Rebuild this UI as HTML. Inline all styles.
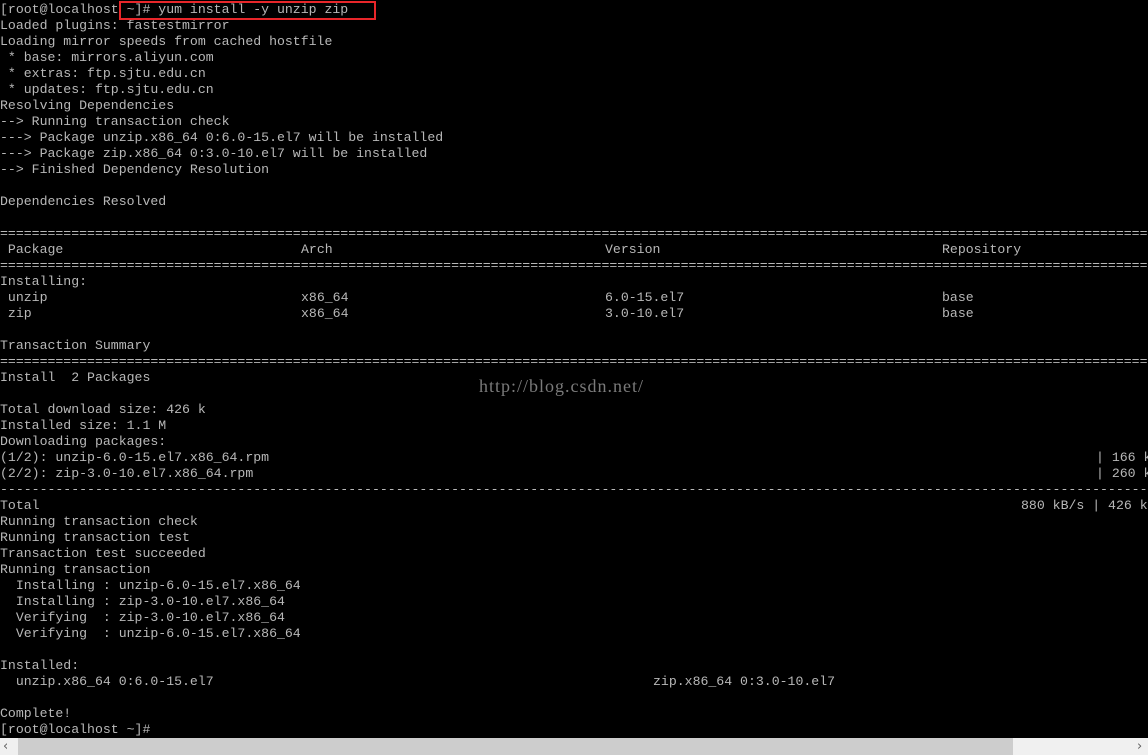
<!DOCTYPE html>
<html><head><meta charset="utf-8"><style>
html,body{margin:0;padding:0;background:#000;width:1148px;height:755px;overflow:hidden}
#w{position:absolute;left:0;top:1px;width:1148px;height:737px}
.t{position:absolute;white-space:pre;font-family:"Liberation Mono",monospace;font-size:13.2px;line-height:16px;color:#b8b8b8;height:16px}
.box{position:absolute;left:119px;top:1px;width:253px;height:15px;border:2px solid #e8262a}
.wm{position:absolute;left:479px;top:376px;font-family:"Liberation Serif",serif;font-size:18px;color:#7a7a7a;letter-spacing:1px}
.sb{position:absolute;left:0;top:738px;width:1148px;height:17px;background:#f0f0f0}
.th{position:absolute;left:18px;top:738px;width:995px;height:17px;background:#cdcdcd}
.ar{position:absolute;top:738px;font-family:"DejaVu Sans",sans-serif;font-size:13px;line-height:17px;color:#606060}
</style></head><body>
<div id="w">
<div class="t" style="left:0;top:1px">[root@localhost ~]# yum install -y unzip zip</div>
<div class="t" style="left:0;top:17px">Loaded plugins: fastestmirror</div>
<div class="t" style="left:0;top:33px">Loading mirror speeds from cached hostfile</div>
<div class="t" style="left:0;top:49px"> * base: mirrors.aliyun.com</div>
<div class="t" style="left:0;top:65px"> * extras: ftp.sjtu.edu.cn</div>
<div class="t" style="left:0;top:81px"> * updates: ftp.sjtu.edu.cn</div>
<div class="t" style="left:0;top:97px">Resolving Dependencies</div>
<div class="t" style="left:0;top:113px">--&gt; Running transaction check</div>
<div class="t" style="left:0;top:129px">---&gt; Package unzip.x86_64 0:6.0-15.el7 will be installed</div>
<div class="t" style="left:0;top:145px">---&gt; Package zip.x86_64 0:3.0-10.el7 will be installed</div>
<div class="t" style="left:0;top:161px">--&gt; Finished Dependency Resolution</div>
<div class="t" style="left:0;top:193px">Dependencies Resolved</div>
<div class="t" style="left:0;top:225px">==================================================================================================================================================</div>
<div class="t" style="left:0;top:241px"> Package</div><div class="t" style="left:301px;top:241px">Arch</div><div class="t" style="left:605px;top:241px">Version</div><div class="t" style="left:942px;top:241px">Repository</div>
<div class="t" style="left:0;top:257px">==================================================================================================================================================</div>
<div class="t" style="left:0;top:273px">Installing:</div>
<div class="t" style="left:0;top:289px"> unzip</div><div class="t" style="left:301px;top:289px">x86_64</div><div class="t" style="left:605px;top:289px">6.0-15.el7</div><div class="t" style="left:942px;top:289px">base</div>
<div class="t" style="left:0;top:305px"> zip</div><div class="t" style="left:301px;top:305px">x86_64</div><div class="t" style="left:605px;top:305px">3.0-10.el7</div><div class="t" style="left:942px;top:305px">base</div>
<div class="t" style="left:0;top:337px">Transaction Summary</div>
<div class="t" style="left:0;top:353px">==================================================================================================================================================</div>
<div class="t" style="left:0;top:369px">Install  2 Packages</div>
<div class="t" style="left:0;top:401px">Total download size: 426 k</div>
<div class="t" style="left:0;top:417px">Installed size: 1.1 M</div>
<div class="t" style="left:0;top:433px">Downloading packages:</div>
<div class="t" style="left:0;top:449px">(1/2): unzip-6.0-15.el7.x86_64.rpm</div><div class="t" style="left:1096px;top:449px">| 166 k</div>
<div class="t" style="left:0;top:465px">(2/2): zip-3.0-10.el7.x86_64.rpm</div><div class="t" style="left:1096px;top:465px">| 260 k</div>
<div class="t" style="left:0;top:481px">--------------------------------------------------------------------------------------------------------------------------------------------------</div>
<div class="t" style="left:0;top:497px">Total</div><div class="t" style="left:1021px;top:497px">880 kB/s | 426 k</div>
<div class="t" style="left:0;top:513px">Running transaction check</div>
<div class="t" style="left:0;top:529px">Running transaction test</div>
<div class="t" style="left:0;top:545px">Transaction test succeeded</div>
<div class="t" style="left:0;top:561px">Running transaction</div>
<div class="t" style="left:0;top:577px">  Installing : unzip-6.0-15.el7.x86_64</div>
<div class="t" style="left:0;top:593px">  Installing : zip-3.0-10.el7.x86_64</div>
<div class="t" style="left:0;top:609px">  Verifying  : zip-3.0-10.el7.x86_64</div>
<div class="t" style="left:0;top:625px">  Verifying  : unzip-6.0-15.el7.x86_64</div>
<div class="t" style="left:0;top:657px">Installed:</div>
<div class="t" style="left:0;top:673px">  unzip.x86_64 0:6.0-15.el7</div><div class="t" style="left:653px;top:673px">zip.x86_64 0:3.0-10.el7</div>
<div class="t" style="left:0;top:705px">Complete!</div>
<div class="t" style="left:0;top:721px">[root@localhost ~]#</div>
</div>
<div class="box"></div>
<div class="wm">http://blog.csdn.net/</div>
<div class="sb"></div><div class="th"></div>
<div class="ar" style="left:3px">‹</div><div class="ar" style="left:1137px">›</div>
</body></html>
